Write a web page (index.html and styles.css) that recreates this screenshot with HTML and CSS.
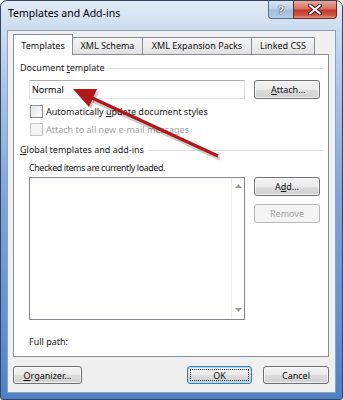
FILE: index.html
```html
<!DOCTYPE html>
<html>
<head>
<meta charset="utf-8">
<link rel="stylesheet" href="styles.css">
</head>
<body>
<div class="window">
  <div class="titlebar">
    <span class="title">Templates and Add-ins</span>
    <div class="caption">
      <div class="cap-btn help">?</div>
      <div class="cap-btn close">
        <svg width="14" height="11" viewBox="0 0 14 11"><path d="M2 1.5 L12 9.5 M12 1.5 L2 9.5" stroke="#3d1a1a" stroke-width="4" stroke-linecap="round"/><path d="M2 1.5 L12 9.5 M12 1.5 L2 9.5" stroke="#ffffff" stroke-width="2.2" stroke-linecap="round"/></svg>
      </div>
    </div>
  </div>
  <div class="client">
    <div class="tabs">
      <div class="tab active">Templates</div>
      <div class="tab w-xml">XML Schema</div>
      <div class="tab w-exp">XML Expansion Packs</div>
      <div class="tab w-css">Linked CSS</div>
    </div>
    <div class="panel">
      <div class="group"><span>Document <u>t</u>emplate</span><div class="rule"></div></div>
      <div class="row tpl-row">
        <div class="textbox">Normal</div>
        <div class="button side">&nbsp;<u>A</u>ttach...</div>
      </div>
      <div class="check first"><span class="box"></span><span>Automatically <u>u</u>pdate document styles</span></div>
      <div class="check disabled"><span class="box"></span><span>Attach to all new e-mail messages</span></div>
      <div class="group global"><span><u>G</u>lobal templates and add-ins</span><div class="rule"></div></div>
      <div class="note tight">Checked items are currently loaded.</div>
      <div class="row list-row">
        <div class="listbox">
          <div class="list-body"></div>
          <div class="scroll">
            <svg width="7" height="4" viewBox="0 0 7 4"><path d="M0 4 L3.5 0 L7 4 Z" fill="#9a9a9a"/></svg>
            <svg width="7" height="4" viewBox="0 0 7 4"><path d="M0 0 L3.5 4 L7 0 Z" fill="#9a9a9a"/></svg>
          </div>
        </div>
        <div class="side-col">
          <div class="button side">A<u>d</u>d...</div>
          <div class="button side disabled">Remove</div>
        </div>
      </div>
      <div class="note path">Full path:</div>
    </div>
    <div class="footer">
      <div class="button org"><u>O</u>rganizer...</div>
      <div class="button ok"><span class="focus">OK</span></div>
      <div class="button cancel">Cancel</div>
    </div>
  </div>
  <svg class="arrow" width="343" height="400" viewBox="0 0 343 400">
    <g fill="rgba(60,0,0,0.22)" stroke="rgba(60,0,0,0.22)">
      <line x1="220" y1="159" x2="93" y2="101" stroke-width="3.4"/>
      <polygon points="76,92 99,92 91,109" stroke="none"/>
    </g>
    <g fill="#b0181c" stroke="#b0181c">
      <line x1="218" y1="156" x2="90" y2="97" stroke-width="3.2"/>
      <polygon points="73,89 97,89 89,107" stroke="none"/>
    </g>
  </svg>
</div>
</body>
</html>
```
FILE: styles.css
```css
* { box-sizing: border-box; }

body {
  margin: 0;
  width: 343px;
  height: 400px;
  overflow: hidden;
  background: #ffffff;
  font-family: "Noto Sans", "Open Sans", sans-serif;
  font-size: 9px;
  color: #1a1a1a;
}

u { text-decoration: underline; text-underline-offset: 1px; }

.window {
  position: relative;
  width: 343px;
  height: 400px;
  display: flex;
  flex-direction: column;
  padding: 0 6px 6px;
  border: 1px solid #33455f;
  border-radius: 7px 7px 3px 3px;
  background: linear-gradient(180deg, #e2ebf6 0px, #ccdcef 29px, #a9c3e6 90px, #7ea3d8 200px, #6390d2 320px, #4f7fc5 400px);
}

.titlebar {
  height: 29px;
  display: flex;
  align-items: flex-start;
}

.title {
  margin-top: 4px;
  margin-left: 1px;
  line-height: 16px;
  font-size: 10.5px;
  color: #000;
}

.caption {
  margin-left: auto;
  margin-right: -1px;
  display: flex;
}

.cap-btn {
  height: 18px;
  display: flex;
  align-items: center;
  justify-content: center;
  border: 1px solid #5d6f8a;
  border-top: none;
}

.help {
  width: 25px;
  border-radius: 0 0 0 4px;
  border-right: none;
  background: linear-gradient(180deg, #d7e3f1 0%, #bccfe6 48%, #a3bcdc 52%, #b5cbe6 100%);
  color: #fff;
  font-weight: bold;
  font-size: 11px;
  text-shadow: 0 0 2px #2a3a55, 0 0 1px #2a3a55;
}

.close {
  width: 44px;
  border-color: #6b2a28;
  border-radius: 0 0 4px 0;
  background: linear-gradient(180deg, #e9a99c 0%, #d7705f 45%, #c2382a 55%, #d25a48 85%, #e59a84 100%);
}

.client {
  flex: 1;
  display: flex;
  flex-direction: column;
  background: #f0f0f0;
  border: 1px solid #8fa2bd;
  padding: 3px 6px 8px 5px;
}

.tabs {
  height: 20px;
  display: flex;
  align-items: flex-end;
}

.tab {
  height: 17px;
  border: 1px solid #898c95;
  border-bottom: none;
  margin-left: -1px;
  background: linear-gradient(180deg, #f6f6f6 0%, #ececec 50%, #e0e0e0 100%);
  text-align: center;
  line-height: 15px;
  color: #111;
}

.tab.active {
  width: 60px;
  height: 21px;
  margin-left: 0;
  margin-bottom: -1px;
  position: relative;
  z-index: 1;
  background: #ffffff;
  line-height: 21px;
}

.w-xml { width: 71px; }
.w-exp { width: 110px; }
.w-css { width: 64px; }

.panel {
  height: 303px;
  border: 1px solid #898c95;
  background: #ffffff;
  padding: 6px 5px 0 6px;
  display: flex;
  flex-direction: column;
}

.group {
  height: 14px;
  display: flex;
  align-items: center;
  gap: 4px;
  line-height: 14px;
}

.group.global { margin-top: 7px; }

.rule {
  flex: 1;
  height: 1px;
  background: #dde1e6;
}

.row { display: flex; }

.tpl-row { margin-top: 5px; }

.textbox {
  margin-left: 9px;
  width: 216px;
  height: 19px;
  border: 1px solid #abadb3;
  border-color: #abadb3 #dbdfe6 #e3e9ef #e2e3ea;
  padding-left: 2px;
  line-height: 17px;
  background: #fff;
  color: #000;
}

.button {
  height: 19px;
  border: 1px solid #707070;
  border-radius: 3px;
  background: linear-gradient(180deg, #f2f2f2 0%, #ebebeb 50%, #dddddd 51%, #cfcfcf 100%);
  box-shadow: inset 0 0 0 1px rgba(255,255,255,0.7);
  display: flex;
  align-items: center;
  justify-content: center;
  color: #111;
}

.button.side {
  margin-left: 9px;
  width: 66px;
}

.button.disabled {
  border-color: #b5b8bb;
  background: #f4f4f4;
  box-shadow: none;
  color: #a3a3a3;
}

.check {
  height: 13px;
  display: flex;
  align-items: center;
  gap: 3px;
  margin-left: 10px;
  line-height: 13px;
}

.check.first { margin-top: 6px; }
.check.disabled { margin-top: 5px; color: #a2a2a2; }

.box {
  width: 13px;
  height: 13px;
  border: 1px solid #8e8f8f;
  background: linear-gradient(135deg, #dcdcdc 0%, #f4f4f4 60%, #ffffff 100%);
  box-shadow: inset 0 0 0 1px #f4f4f4;
}

.check.disabled .box {
  border-color: #c8c8c8;
  background: #f4f4f4;
  box-shadow: none;
}

.note {
  margin-top: 4px;
  margin-left: 9px;
  height: 14px;
  line-height: 14px;
}

.note.tight { letter-spacing: -0.45px; }

.list-row { margin-top: 2px; }

.listbox {
  margin-left: 9px;
  width: 216px;
  height: 143px;
  border: 1px solid #828790;
  display: flex;
  background: #fff;
}

.list-body { flex: 1; }

.scroll {
  width: 13px;
  border-left: 1px solid #eeeeee;
  display: flex;
  flex-direction: column;
  align-items: center;
  justify-content: space-between;
  padding: 6px 0 7px;
}

.side-col {
  display: flex;
  flex-direction: column;
  gap: 8px;
}

.note.path { margin-top: 15px; }

.footer {
  margin-top: 9px;
  display: flex;
}

.footer .button { height: 18px; }

.org { width: 69px; }

.ok {
  margin-left: auto;
  width: 65px;
  border-color: #3c7fb1;
  box-shadow: inset 0 0 0 1px #a6dcf7;
  padding: 2px;
}

.focus {
  width: 100%;
  height: 100%;
  border: 1px dotted #333;
  display: flex;
  align-items: center;
  justify-content: center;
}

.cancel {
  margin-left: 11px;
  width: 66px;
}

.arrow {
  position: absolute;
  left: -1px;
  top: -1px;
  pointer-events: none;
}
```
